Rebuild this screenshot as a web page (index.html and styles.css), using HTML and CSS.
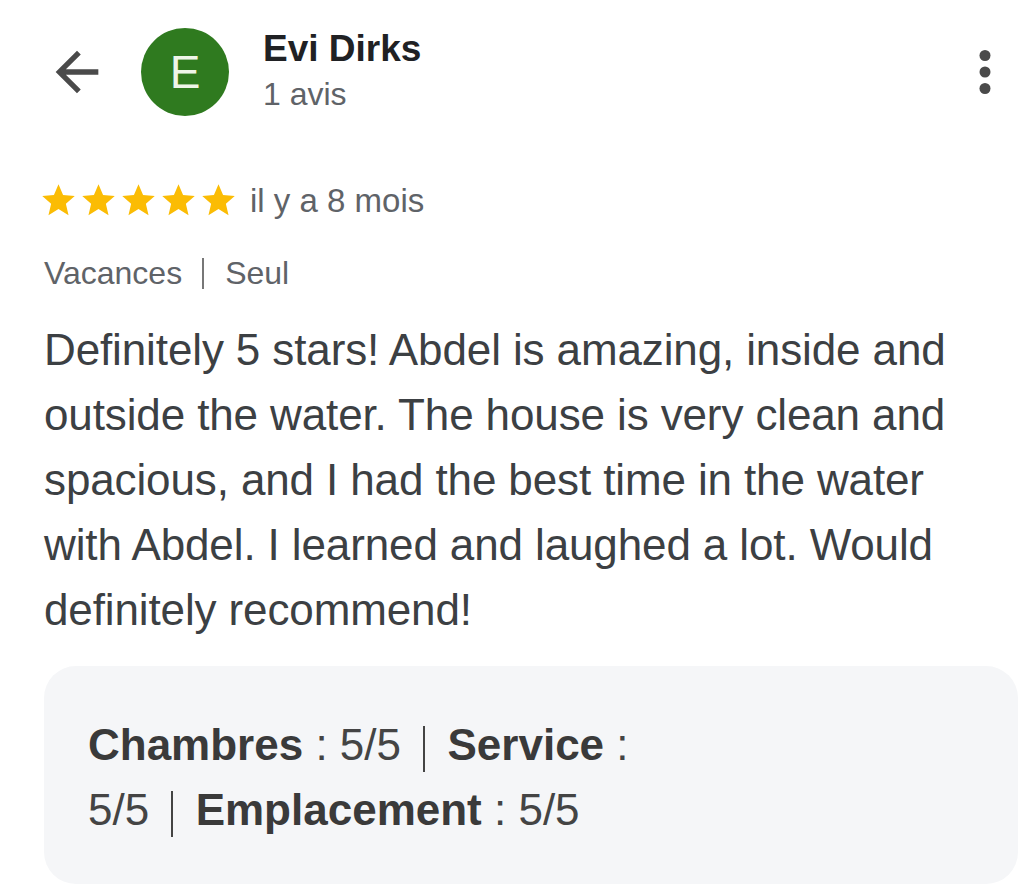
FILE: index.html
```html
<!DOCTYPE html>
<html lang="fr">
<head>
  <meta charset="UTF-8" />
  <meta name="viewport" content="width=device-width, initial-scale=1.0" />
  <title>Avis - Evi Dirks</title>
  <link rel="stylesheet" href="styles.css">
</head>
<body>
  <div class="page">
    <div class="header">
      <svg class="back" viewBox="0 0 24 24"><path d="M20 11H7.83l5.59-5.59L12 4l-8 8 8 8 1.41-1.41L7.83 13H20v-2z"/></svg>
      <div class="avatar">E</div>
      <div class="who">
        <div class="name">Evi Dirks</div>
        <div class="count">1 avis</div>
      </div>
      <svg class="more" viewBox="0 0 24 24"><circle cx="12" cy="6" r="2"/><circle cx="12" cy="12" r="2"/><circle cx="12" cy="18" r="2"/></svg>
    </div>

    <div class="rating">
      <div class="stars">
        <svg viewBox="0 0 24 24"><path d="M12 17.27L18.18 21l-1.64-7.03L22 9.24l-7.19-.61L12 2 9.19 8.63 2 9.24l5.46 4.73L5.820 21z"/></svg>
        <svg viewBox="0 0 24 24"><path d="M12 17.27L18.18 21l-1.64-7.03L22 9.24l-7.19-.61L12 2 9.19 8.63 2 9.24l5.46 4.73L5.82 21z"/></svg>
        <svg viewBox="0 0 24 24"><path d="M12 17.27L18.18 21l-1.64-7.03L22 9.24l-7.19-.61L12 2 9.19 8.63 2 9.24l5.46 4.73L5.82 21z"/></svg>
        <svg viewBox="0 0 24 24"><path d="M12 17.27L18.18 21l-1.64-7.03L22 9.24l-7.19-.61L12 2 9.19 8.63 2 9.24l5.46 4.73L5.82 21z"/></svg>
        <svg viewBox="0 0 24 24"><path d="M12 17.27L18.18 21l-1.64-7.03L22 9.24l-7.19-.61L12 2 9.19 8.63 2 9.24l5.46 4.73L5.82 21z"/></svg>
      </div>
      <span class="when">il y a 8 mois</span>
    </div>

    <div class="tags">
      <span>Vacances</span>
      <span class="bar"></span>
      <span>Seul</span>
    </div>

    <p class="review">Definitely 5 stars! Abdel is amazing, inside and outside the water. The house is very clean and spacious, and I had the best time in the water with Abdel. I learned and laughed a lot. Would definitely recommend!</p>

    <div class="scores">
      <p class="scores-text"><b>Chambres</b><span class="val">&nbsp;: 5/5</span> <span class="sep"></span> <b>Service</b><span class="val">&nbsp;:</span> <span class="val">5/5</span> <span class="sep"></span> <b>Emplacement</b><span class="val">&nbsp;: 5/5</span></p>
    </div>
  </div>
</body>
</html>
```

FILE: styles.css
```css
body {
  margin: 0;
  font-family: "Liberation Sans", Arial, sans-serif;
  background-color: white;
  color: #3c4043;
}
.page {
  padding: 28px 6px 0 44px;
}
.header {
  display: flex;
  align-items: center;
}
.back {
  width: 64px;
  height: 64px;
  margin-left: 1px;
  fill: #4a4a4a;
}
.avatar {
  width: 88px;
  height: 88px;
  margin-left: 32px;
  border-radius: 50%;
  background-color: #2f7a1f;
  color: #eef5e8;
  font-size: 46px;
  line-height: 88px;
  text-align: center;
}
.who {
  align-self: flex-start;
  margin-left: 34px;
  margin-top: -1px;
}
.name {
  font-size: 37px;
  line-height: 44px;
  font-weight: bold;
  color: #202124;
}
.count {
  margin-top: 3px;
  font-size: 32px;
  line-height: 40px;
  color: #5f6368;
}
.more {
  width: 66px;
  height: 66px;
  margin-left: auto;
  fill: #4a4a4a;
}
.rating {
  display: flex;
  align-items: center;
  margin-top: 65px;
}
.stars {
  display: flex;
  gap: 1px;
  margin-left: -5px;
}
.stars svg {
  width: 39px;
  height: 39px;
  fill: #fbbc04;
}
.when {
  margin-left: 12px;
  font-size: 33px;
  line-height: 38px;
  color: #5f6368;
}
.tags {
  display: flex;
  align-items: center;
  margin-top: 33px;
  font-size: 32px;
  line-height: 40px;
  color: #5f6368;
}
.bar {
  width: 2px;
  height: 31px;
  margin: 0 21px 0 20px;
  background-color: #777;
}
.review {
  margin: 24px 0 0;
  max-width: 920px;
  font-size: 44px;
  line-height: 65px;
  letter-spacing: -0.12px;
  color: #3c4043;
}
.scores {
  margin-top: 24px;
  padding: 46px 44px 42px;
  border-radius: 32px;
  background-color: #f5f6f8;
}
.scores-text {
  margin: 0;
  max-width: 590px;
  font-size: 44px;
  line-height: 65px;
  color: #444;
}
.scores-text b {
  color: #3a3a3a;
}
.sep {
  display: inline-block;
  width: 2px;
  height: 46px;
  margin: 0 10px;
  vertical-align: -12px;
  background-color: #444;
}
```
